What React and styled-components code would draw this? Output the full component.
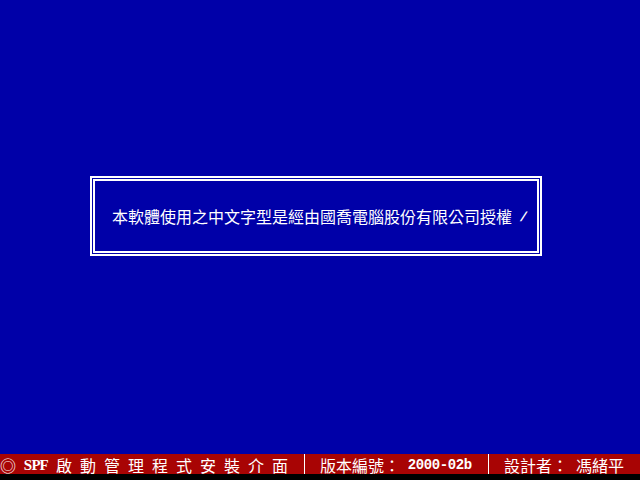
import React from "react";
import styled, { createGlobalStyle } from "styled-components";

// ------------------ GLOBAL ------------------

const GlobalStyle = createGlobalStyle`
  html, body {
    margin: 0;
    padding: 0;
    background: #0000a8;
  }
  #root {
    width: 640px;
    height: 480px;
  }
`;

// ------------------ STYLED COMPONENTS ------------------

const Screen = styled.div`
  width: 640px;
  height: 480px;
  display: flex;
  flex-direction: column;
  background: #0000a8;
  color: #ffffff;
  font-family: "Noto Sans CJK TC", "Liberation Sans", sans-serif;
  overflow: hidden;
`;

const Desktop = styled.main`
  flex: 1;
  padding: 176px 0 0 90px;
`;

const Frame = styled.div`
  box-sizing: border-box;
  width: 452px;
  height: 80px;
  border: 2px solid #ffffff;
  padding: 1px;
`;

const FrameInner = styled.div`
  box-sizing: border-box;
  height: 100%;
  border: 2px solid #ffffff;
  display: flex;
  align-items: center;
  padding-left: 17px;
`;

const Row = styled.div`
  display: flex;
  align-items: center;
  height: 16px;
`;

const Cell = styled.span`
  display: inline-flex;
  justify-content: center;
  align-items: center;
  width: ${({ $wide }) => ($wide ? 16 : 8)}px;
  height: 16px;
  font-size: ${({ $wide }) => ($wide ? 16 : 14)}px;
  line-height: 16px;
  font-weight: ${({ $bold }) => ($bold ? 700 : 400)};
  font-family: ${({ $wide, $bold }) =>
    $wide
      ? `"Noto Sans CJK TC", sans-serif`
      : $bold
      ? `"Liberation Mono", monospace`
      : `"Liberation Sans", sans-serif`};
  white-space: pre;
`;

const SerifCell = styled(Cell)`
  font-family: "Liberation Serif", serif;
  font-size: 15px;
`;

const Slash = styled.span`
  width: 8px;
  height: 16px;
  display: inline-flex;
  align-items: center;
  justify-content: center;
  font-family: "Liberation Sans", sans-serif;
  font-size: 13px;
  font-weight: 700;
  transform: skewX(-25deg);
`;

const StatusBar = styled.footer`
  height: 20px;
  background: #a80404;
  display: flex;
  align-items: stretch;
  border-bottom: 6px solid #000000;
`;

const BarRow = styled.div`
  display: flex;
  align-items: center;
  padding-top: 1px;
`;

const Divider = styled.span`
  width: 16px;
  display: flex;
  justify-content: center;
  align-self: stretch;

  &::before {
    content: "";
    width: 1px;
    background: #ffffff;
  }
`;

// ------------------ HELPERS ------------------

const isWide = (ch) => ch.charCodeAt(0) > 0x2000;

const Chars = ({ text, bold, serif }) =>
  [...text].map((ch, i) =>
    serif ? (
      <SerifCell key={i} $bold>
        {ch}
      </SerifCell>
    ) : (
      <Cell key={i} $wide={isWide(ch)} $bold={bold}>
        {ch}
      </Cell>
    )
  );

// ------------------ APP ------------------

const App = () => {
  return (
    <>
      <GlobalStyle />
      <Screen>
        <Desktop>
          <Frame>
            <FrameInner>
              <Row>
                <Chars text="本軟體使用之中文字型是經由國喬電腦股份有限公司授權 " />
                <Slash>/</Slash>
              </Row>
            </FrameInner>
          </Frame>
        </Desktop>

        <StatusBar>
          <BarRow>
            <Chars text="◎ " />
            <Chars text="SPF" serif />
            <Chars text=" 啟 動 管 理 程 式 安 裝 介 面 " />
          </BarRow>
          <Divider />
          <BarRow>
            <Chars text=" 版本編號： " />
            <Chars text="2000-02b" bold />
            <Chars text=" " />
          </BarRow>
          <Divider />
          <BarRow>
            <Chars text=" 設計者： 馮緒平" />
          </BarRow>
        </StatusBar>
      </Screen>
    </>
  );
};

export default App;
